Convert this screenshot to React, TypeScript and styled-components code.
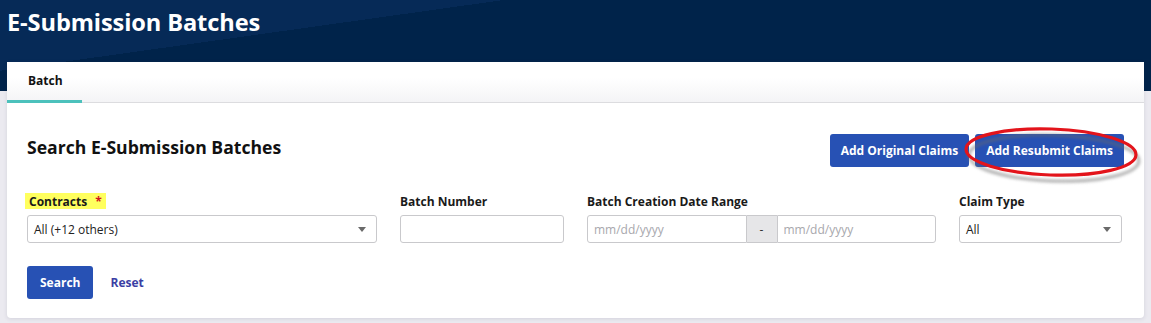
import styled, { createGlobalStyle } from "styled-components";

const GlobalStyle = createGlobalStyle`
  html, body {
    margin: 0;
    padding: 0;
    background: #ebeaf0;
    font-family: "Open Sans", "Liberation Sans", sans-serif;
    color: #1a1a1a;
  }
  * { box-sizing: border-box; }
`;

type Field = {
  label: string;
  required?: boolean;
  highlight?: boolean;
  kind: "select" | "text" | "range";
  value?: string;
};

const fields: Field[] = [
  { label: "Contracts", required: true, highlight: true, kind: "select", value: "All (+12 others)" },
  { label: "Batch Number", kind: "text" },
  { label: "Batch Creation Date Range", kind: "range" },
  { label: "Claim Type", kind: "select", value: "All" },
];

export default function App() {
  return (
    <>
      <GlobalStyle />
      <Page>
        <Header>
          <PageTitle>E-Submission Batches</PageTitle>
        </Header>
        <Content>
          <Card>
            <TabBar>
              <Tab $active>Batch</Tab>
            </TabBar>
            <CardBody>
              <TopRow>
                <SectionTitle>Search E-Submission Batches</SectionTitle>
                <ButtonGroup>
                  <PrimaryButton>Add Original Claims</PrimaryButton>
                  <Highlighted>
                    <PrimaryButton>Add Resubmit Claims</PrimaryButton>
                    <CircleMark viewBox="0 0 180 56" aria-hidden>
                      <defs>
                        <filter id="sh" x="-10%" y="-20%" width="120%" height="150%">
                          <feGaussianBlur stdDeviation="1.6" />
                        </filter>
                      </defs>
                      <ellipse
                        cx="90"
                        cy="31"
                        rx="85"
                        ry="23"
                        fill="none"
                        stroke="#6b6b6b"
                        strokeWidth="3"
                        opacity="0.55"
                        filter="url(#sh)"
                        transform="rotate(2 90 31) translate(2 3)"
                      />
                      <ellipse
                        cx="89"
                        cy="28"
                        rx="85"
                        ry="23"
                        fill="none"
                        stroke="#e3141b"
                        strokeWidth="3.2"
                        transform="rotate(2 89 28)"
                      />
                    </CircleMark>
                  </Highlighted>
                </ButtonGroup>
              </TopRow>

              <FieldsGrid>
                {fields.map((f) => (
                  <FieldCol key={f.label}>
                    <Label $highlight={f.highlight}>
                      {f.label}
                      {f.required && <Required>*</Required>}
                    </Label>
                    {f.kind === "select" && (
                      <SelectBox>
                        <span>{f.value}</span>
                        <Caret />
                      </SelectBox>
                    )}
                    {f.kind === "text" && <TextInput />}
                    {f.kind === "range" && (
                      <RangeGroup>
                        <RangeInput placeholder="mm/dd/yyyy" />
                        <RangeAddon>-</RangeAddon>
                        <RangeInput placeholder="mm/dd/yyyy" />
                      </RangeGroup>
                    )}
                  </FieldCol>
                ))}
              </FieldsGrid>

              <Actions>
                <PrimaryButton $pad={13}>Search</PrimaryButton>
                <LinkButton>Reset</LinkButton>
              </Actions>
            </CardBody>
          </Card>
        </Content>
      </Page>
    </>
  );
}

const Page = styled.div`
  width: 1151px;
  min-height: 323px;
`;

const Header = styled.div`
  height: 91px;
  padding: 6px 7px 0;
  background:
    linear-gradient(172deg, #062a57 0 28%, transparent 28%),
    #00234a;
  background-color: #00234a;
`;

const PageTitle = styled.h1`
  margin: 0;
  color: #fff;
  font-size: 23.6px;
  font-weight: 700;
  line-height: 32px;
  letter-spacing: -0.1px;
`;

const Content = styled.div`
  margin-top: -29px;
  padding: 0 7px 4px;
`;

const Card = styled.div`
  background: #fff;
  border-radius: 0 0 4px 4px;
  box-shadow: 0 1px 4px rgba(40, 40, 70, 0.12);
`;

const TabBar = styled.div`
  display: flex;
  height: 41px;
  border-bottom: 1px solid #dcdcdf;
  background: linear-gradient(#ffffff 40%, #f4f4f6);
`;

const Tab = styled.div<{ $active?: boolean }>`
  display: flex;
  align-items: center;
  padding: 0 19px 2px 21px;
  font-size: 12px;
  font-weight: 700;
  color: #111;
  border-bottom: 3px solid ${(p) => (p.$active ? "#4cc1bc" : "transparent")};
  margin-bottom: -1px;
`;

const CardBody = styled.div`
  padding: 31px 20px 19px;
`;

const TopRow = styled.div`
  display: flex;
  align-items: center;
  justify-content: space-between;
`;

const SectionTitle = styled.h2`
  margin: 0 0 8px;
  font-size: 17.6px;
  font-weight: 700;
  color: #111;
`;

const ButtonGroup = styled.div`
  display: flex;
  gap: 6px;
`;

const PrimaryButton = styled.button<{ $pad?: number }>`
  height: 33px;
  padding: 0 ${(p) => p.$pad ?? 11}px;
  border: none;
  border-radius: 3px;
  background: #2751b4;
  color: #fff;
  font-family: inherit;
  font-size: 12px;
  font-weight: 700;
  cursor: pointer;
`;

const Highlighted = styled.div`
  position: relative;
  display: flex;
`;

const CircleMark = styled.svg`
  position: absolute;
  left: -13px;
  top: -10px;
  width: 180px;
  height: 56px;
  overflow: visible;
  pointer-events: none;
`;

const FieldsGrid = styled.div`
  display: grid;
  grid-template-columns: 350px 164px 349px 163px;
  column-gap: 23px;
  margin-top: 26px;
`;

const FieldCol = styled.div`
  display: flex;
  flex-direction: column;
  align-items: flex-start;
  gap: 6px;
`;

const Label = styled.span<{ $highlight?: boolean }>`
  display: inline-flex;
  align-items: center;
  height: 16px;
  padding: 0 ${(p) => (p.$highlight ? "4px" : "0")};
  margin-left: ${(p) => (p.$highlight ? "-2px" : "0")};
  background: ${(p) => (p.$highlight ? "#ffff5e" : "transparent")};
  font-size: 12px;
  font-weight: 700;
  color: #1a1a1a;
`;

const Required = styled.span`
  margin-left: 8px;
  color: #d0161c;
  font-weight: 700;
`;

const inputBase = `
  height: 28px;
  border: 1px solid #c9c9cc;
  border-radius: 3px;
  background: #fff;
  font-family: inherit;
  font-size: 12px;
  color: #222;
`;

const SelectBox = styled.div`
  ${inputBase}
  width: 100%;
  display: flex;
  align-items: center;
  justify-content: space-between;
  padding: 0 10px 0 6px;
`;

const Caret = styled.span`
  width: 0;
  height: 0;
  border-left: 4.5px solid transparent;
  border-right: 4.5px solid transparent;
  border-top: 5px solid #6a6a6a;
`;

const TextInput = styled.input`
  ${inputBase}
  width: 100%;
  outline: none;
`;

const RangeGroup = styled.div`
  display: flex;
  width: 100%;
`;

const RangeInput = styled.input`
  ${inputBase}
  flex: 1;
  min-width: 0;
  padding: 0 6px;
  outline: none;
  &::placeholder {
    color: #a8a8ad;
  }
  &:first-child {
    border-radius: 3px 0 0 3px;
  }
  &:last-child {
    border-radius: 0 3px 3px 0;
  }
`;

const RangeAddon = styled.span`
  width: 30px;
  height: 28px;
  display: flex;
  align-items: center;
  justify-content: center;
  background: #e6e6e8;
  border-top: 1px solid #c9c9cc;
  border-bottom: 1px solid #c9c9cc;
  font-size: 12px;
  color: #333;
`;

const Actions = styled.div`
  display: flex;
  align-items: center;
  gap: 5px;
  margin-top: 23px;
`;

const LinkButton = styled.button`
  border: none;
  background: none;
  padding: 0 12px;
  font-family: inherit;
  font-size: 12px;
  font-weight: 700;
  color: #3b3fa4;
  cursor: pointer;
`;
